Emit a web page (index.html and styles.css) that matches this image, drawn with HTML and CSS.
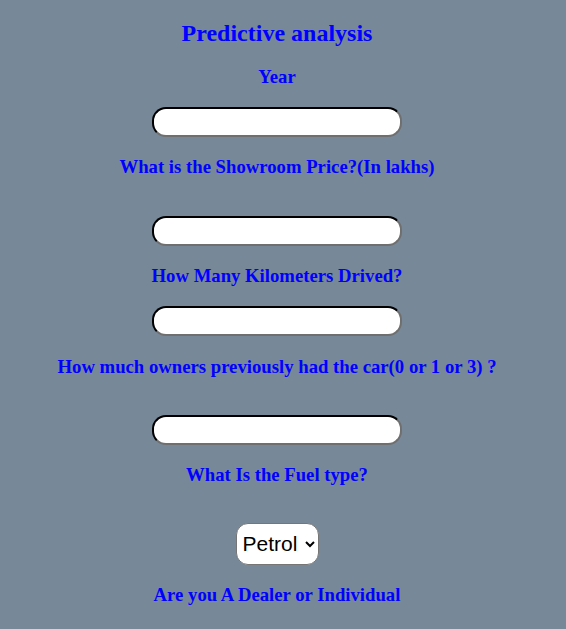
FILE: index.html
```html
<!DOCTYPE html>
<html>
<head>
<meta charset="utf-8">
<link rel="stylesheet" href="styles.css">
</head>
<body>
<main class="form">
  <h1 class="title">Predictive analysis</h1>
  <label class="label">Year</label>
  <div class="field"><input class="input" type="text"></div>
  <label class="label">What is the Showroom Price?(In lakhs)</label>
  <div class="field spaced"><input class="input" type="text"></div>
  <label class="label">How Many Kilometers Drived?</label>
  <div class="field"><input class="input" type="text"></div>
  <label class="label">How much owners previously had the car(0 or 1 or 3) ?</label>
  <div class="field spaced"><input class="input" type="text"></div>
  <label class="label">What Is the Fuel type?</label>
  <div class="field spaced-select">
    <select class="select">
      <option>Petrol</option>
      <option>Diesel</option>
      <option>CNG</option>
    </select>
  </div>
  <label class="label">Are you A Dealer or Individual</label>
</main>
</body>
</html>
```
FILE: styles.css
```css
html, body {
  margin: 0;
  padding: 0;
}
body {
  background: #778899;
  font-family: "Liberation Serif", "Times New Roman", serif;
  font-size: 16px;
  color: #0000ff;
  min-height: 629px;
}
.form {
  display: block;
  width: 554px;
  text-align: center;
  padding-top: 19.5px;
}
.title {
  font-size: 24px;
  font-weight: bold;
  margin: 0 0 19px 0;
  line-height: normal;
}
.label {
  display: block;
  font-size: 18.72px;
  font-weight: bold;
  margin: 19.3px 0;
  line-height: normal;
}
.field {
  display: flex;
  justify-content: center;
}
.field.spaced {
  padding-top: 18px;
}
.field.spaced-select {
  padding-top: 17.5px;
}
.input {
  box-sizing: border-box;
  width: 250px;
  height: 30px;
  margin: 0;
  padding: 1px 12px;
  border-width: 2px;
  border-style: solid;
  border-color: #000 #6f6f6f #6f6f6f #000;
  border-radius: 14px;
  background: #fff;
  font-size: 16px;
  outline: none;
}
.select {
  box-sizing: border-box;
  width: 83px;
  height: 42px;
  margin: 0;
  padding: 0 4px 0 2px;
  border: 1px solid #767676;
  border-radius: 12px;
  background: #fff;
  color: #000;
  font-family: "Liberation Sans", Arial, sans-serif;
  font-size: 21px;
}
```
